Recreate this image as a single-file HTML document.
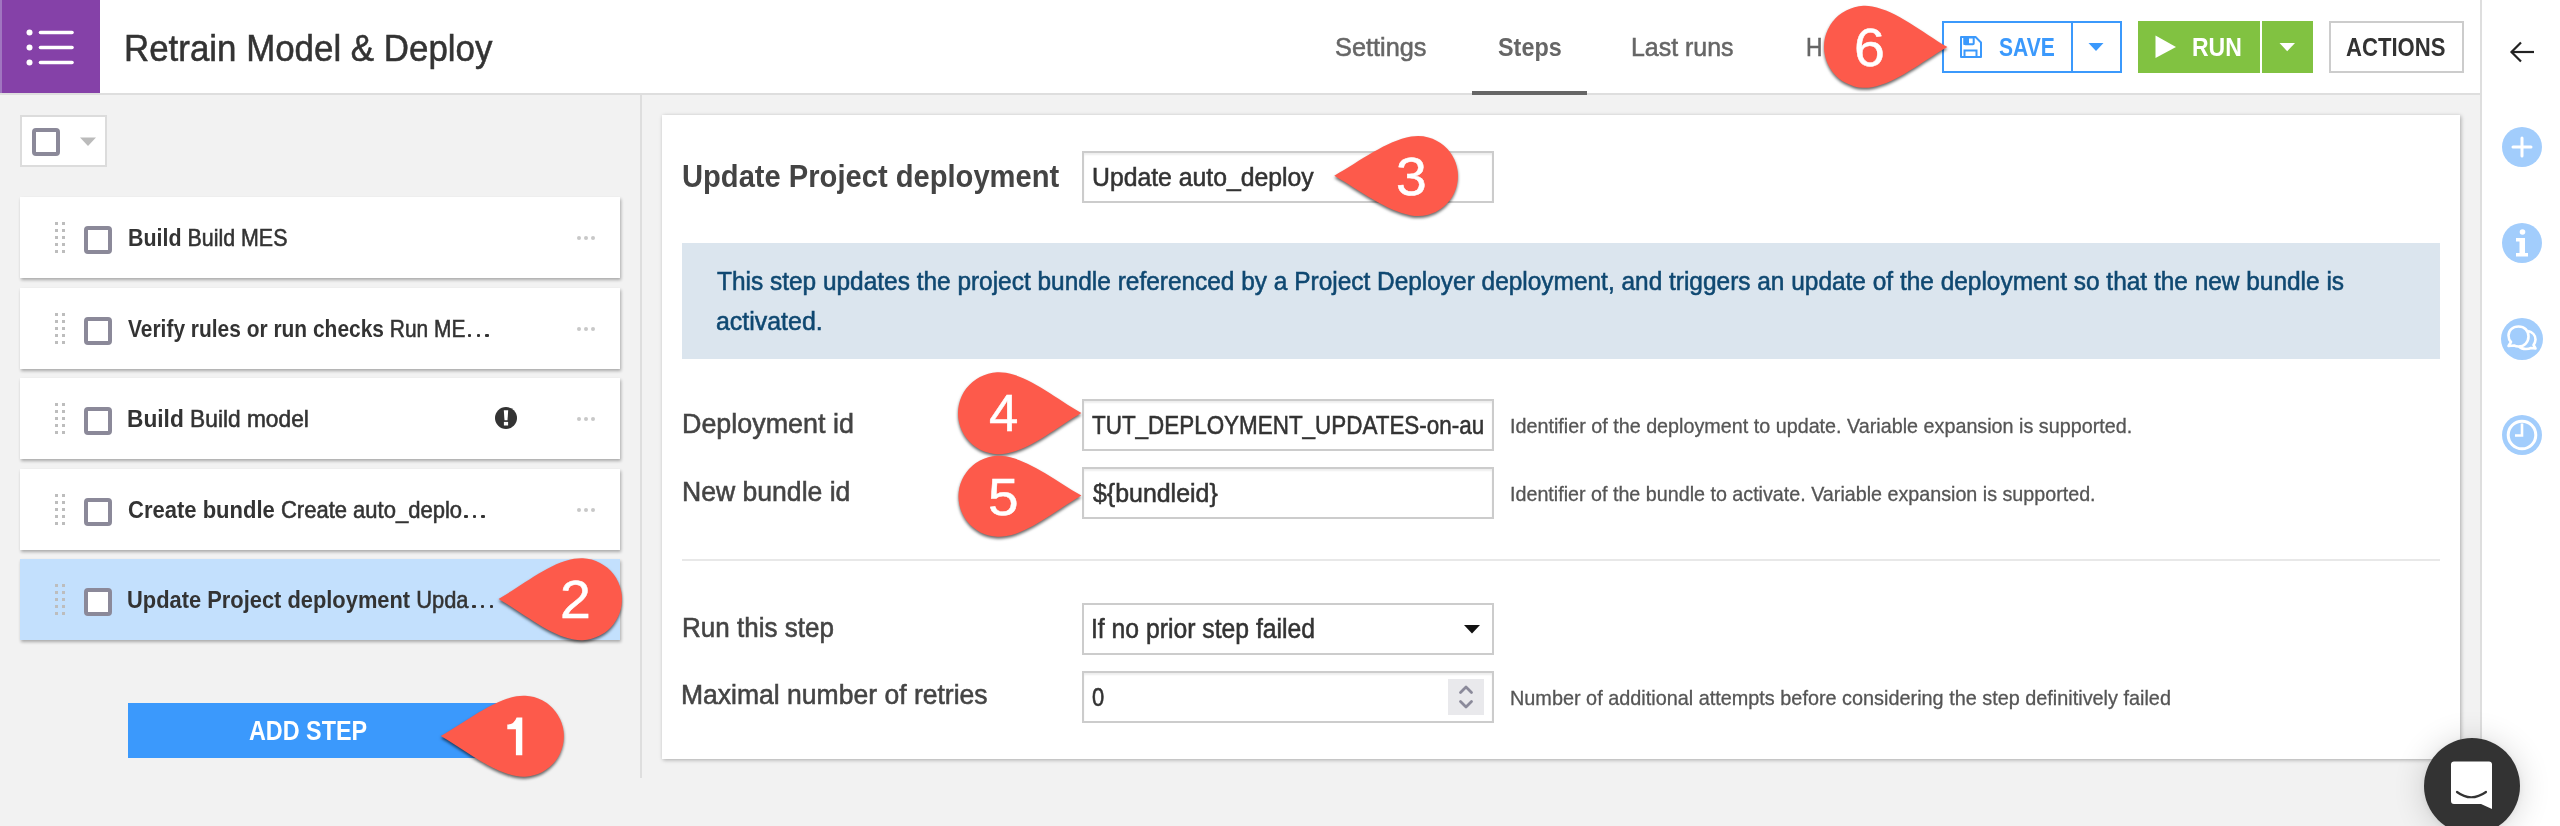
<!DOCTYPE html>
<html><head><meta charset="utf-8"><title>Retrain Model &amp; Deploy</title>
<style>
*{box-sizing:border-box}
html,body{margin:0;padding:0}
body{width:2560px;height:826px;overflow:hidden;position:relative;background:#f2f2f2;font-family:"Liberation Sans",sans-serif}
.t{position:absolute;white-space:nowrap;line-height:1;transform-origin:0 0;font-family:"Liberation Sans",sans-serif}
.t{-webkit-text-stroke:0.55px currentColor}
.t b,.t.tb{font-weight:bold;-webkit-text-stroke:0}
.t.ns{-webkit-text-stroke:0.5px currentColor}
.t.hs{-webkit-text-stroke:0.3px currentColor}
.abs{position:absolute}
#header{position:absolute;left:0;top:0;width:2480px;height:95px;background:#fff;border-bottom:2px solid #dedede}
#logo{position:absolute;left:0;top:0;width:100px;height:93px;background:#8541a8;border-left:2px solid #a076c0}
#tabline{position:absolute;left:1472px;top:91px;width:115px;height:4px;background:#666}
#savebtn{position:absolute;left:1942px;top:21px;width:180px;height:52px;border:2px solid #3b99fc;background:#fff}
#savediv{position:absolute;left:2071px;top:21px;width:2px;height:52px;background:#3b99fc}
#runbtn{position:absolute;left:2138px;top:21px;width:122px;height:52px;background:#81c241}
#runcaret{position:absolute;left:2262px;top:21px;width:51px;height:52px;background:#81c241}
#actbtn{position:absolute;left:2329px;top:21px;width:135px;height:52px;border:2px solid #cccccc;background:#fff}
#sidebar{position:absolute;left:2480px;top:0;width:80px;height:826px;background:#fff;border-left:2px solid #dedede}
.sicon{position:absolute;left:2502px;width:40px;height:40px;border-radius:50%;background:#a2cdfc}
#vdiv{position:absolute;left:640px;top:95px;width:2px;height:683px;background:#dedede}
#selall{position:absolute;left:20px;top:115px;width:87px;height:52px;background:#fff;border:2px solid #dcdcdc}
.cb{position:absolute;width:28px;height:28px;border:4px solid #8b8999;border-radius:4px;background:#fff}
.card{position:absolute;left:20px;width:600px;height:81px;background:#fff;box-shadow:1px 2px 3px rgba(0,0,0,.3)}
.card.sel{background:#c3e0fd}
.dh{position:absolute;width:3px;height:3px;background:#bdbdbd}
.ed{position:absolute;width:3.4px;height:3.2px;border-radius:1px;background:#333}
.md{position:absolute;width:4px;height:4px;border-radius:50%;background:#c8c8c8}
#addstep{position:absolute;left:128px;top:703px;width:382px;height:55px;background:#3b99fc}
#main{position:absolute;left:662px;top:115px;width:1798px;height:644px;background:#fff;box-shadow:1px 1px 4px rgba(0,0,0,.3)}
.inp{position:absolute;left:1082px;width:412px;height:52px;background:#fff;border:2px solid #cccccc;box-shadow:inset 0 2px 2px rgba(0,0,0,.07)}
#info{position:absolute;left:682px;top:243px;width:1758px;height:116px;background:#dbe5ee}
#hr{position:absolute;left:682px;top:559px;width:1758px;height:2px;background:#e8e8e8}
#spin{position:absolute;left:1448px;top:679px;width:36px;height:36px;background:#e9e9ec}
#intercom{position:absolute;left:2424px;top:738px;width:96px;height:96px;border-radius:50%;background:#333;box-shadow:0 1px 6px rgba(0,0,0,.06),0 2px 32px rgba(0,0,0,.16)}
#markers{position:absolute;left:0;top:0;width:2560px;height:826px;filter:drop-shadow(0 2px 1.5px rgba(0,0,0,.6))}
</style></head><body>
<div id="header"></div>
<div id="logo"><svg class="abs" style="left:-2px;top:0" width="100" height="93" viewBox="0 0 100 93">
<circle cx="29.5" cy="32.5" r="3" fill="#fff"/><circle cx="29.5" cy="47.5" r="3" fill="#fff"/><circle cx="29.5" cy="62.5" r="3" fill="#fff"/>
<g stroke="#fff" stroke-width="3.6" stroke-linecap="round"><line x1="40.5" y1="32.5" x2="72" y2="32.5"/><line x1="40.5" y1="47.5" x2="72" y2="47.5"/><line x1="40.5" y1="62.5" x2="72" y2="62.5"/></g></svg></div>
<span class="t" style="left:124.2px;top:29.6px;font-size:37.10px;color:#333;transform:scaleX(0.9408)">Retrain Model &amp; Deploy</span>
<span class="t" style="left:1335.4px;top:34.0px;font-size:26.23px;color:#666;transform:scaleX(0.9652)">Settings</span><span class="t tb" style="left:1497.6px;top:34.0px;font-size:26.23px;color:#666;transform:scaleX(0.8919)">Steps</span><span class="t" style="left:1631.4px;top:34.0px;font-size:26.23px;color:#666;transform:scaleX(0.9502)">Last runs</span><span class="t" style="left:1805.7px;top:34.0px;font-size:26.23px;color:#666;transform:scaleX(0.8700)">H</span>
<div id="tabline"></div>
<div id="savebtn"></div><div id="savediv"></div>
<svg class="abs" style="left:1959px;top:35px" width="24" height="24" viewBox="0 0 24 24"><path d="M2,2 H16.5 L22,7.5 V22 H2 Z" fill="none" stroke="#3b99fc" stroke-width="2" stroke-linejoin="round"/><rect x="5.5" y="2.5" width="9.2" height="6.8" rx="0.8" fill="none" stroke="#3b99fc" stroke-width="2"/><rect x="4.5" y="2" width="5.5" height="8" fill="#3b99fc"/><rect x="5.5" y="15.5" width="12" height="6.5" fill="none" stroke="#3b99fc" stroke-width="2"/></svg>
<span class="t tb" style="left:1998.9px;top:35.1px;font-size:25.80px;color:#3b99fc;transform:scaleX(0.8163)">SAVE</span>
<svg class="abs" style="left:2088px;top:42px" width="16" height="10" viewBox="0 0 16 10"><path d="M0.5,1 H15.5 L8,9 Z" fill="#3b99fc"/></svg>
<div id="runbtn"></div><div id="runcaret"></div>
<svg class="abs" style="left:2155px;top:35px" width="22" height="24" viewBox="0 0 22 24"><path d="M0.5,0.5 L21,12 L0.5,23 Z" fill="#fff"/></svg>
<span class="t tb" style="left:2192.2px;top:35.1px;font-size:25.80px;color:#fff;transform:scaleX(0.8920)">RUN</span>
<svg class="abs" style="left:2279px;top:42px" width="17" height="10" viewBox="0 0 17 10"><path d="M0.5,1 H16 L8.2,9.2 Z" fill="#fff"/></svg>
<div id="actbtn"></div>
<span class="t tb" style="left:2346.4px;top:35.1px;font-size:25.80px;color:#333;transform:scaleX(0.8565)">ACTIONS</span>
<div id="sidebar"></div>
<svg class="abs" style="left:2508px;top:40px" width="28" height="24" viewBox="0 0 28 24"><g fill="none" stroke="#222" stroke-width="2.2"><path d="M26,12 H3.5"/><path d="M13,2.5 L3.5,12 L13,21.5"/></g></svg>
<div class="sicon" style="top:127px"><svg width="40" height="40" viewBox="0 0 40 40"><g stroke="#fff" stroke-width="3" stroke-linecap="round"><line x1="11" y1="20" x2="29" y2="20"/><line x1="20" y1="11" x2="20" y2="29"/></g></svg></div>
<div class="sicon" style="top:223px"><svg width="40" height="40" viewBox="0 0 40 40"><circle cx="20.5" cy="9" r="2.8" fill="#fff"/><path d="M14,15 H23 V30 H26 V33.5 H14 V30 H17.5 V18.5 H14 Z" fill="#fff"/></svg></div>
<div class="sicon" style="top:318px;width:42px;height:42px;left:2501px"><svg width="42" height="42" viewBox="0 0 42 42"><g fill="none" stroke="#fff" stroke-width="2.6" stroke-linejoin="round"><path d="M17.5,8.5 C11.5,8.5 7.5,12.5 7.5,17.5 C7.5,20.5 8.5,22.5 10,24 L7.5,28 L13,27.5 C14.5,28.2 16,28.5 17.5,28.5 C23.5,28.5 27.5,24 27.5,18.5 C27.5,12.5 23.5,8.5 17.5,8.5 Z"/><path d="M27,13 C31.5,14 34.5,17.5 34.5,21.5 C34.5,23.5 33.5,25.5 32.5,27 L34.5,30.5 L30,30 C28.5,30.8 26.5,31 25,31 C22,31 19.5,30 18,28.5"/></g></svg></div>
<div class="sicon" style="top:415px"><svg width="40" height="40" viewBox="0 0 40 40"><circle cx="20" cy="20" r="13.8" fill="none" stroke="#fff" stroke-width="3"/><path d="M20,8.5 V20.5 H13" fill="none" stroke="#fff" stroke-width="2.6"/></svg></div>
<div id="vdiv"></div>
<div id="selall"><div class="cb" style="left:10px;top:11px"></div><svg class="abs" style="left:57px;top:19px" width="18" height="11" viewBox="0 0 18 11"><path d="M1,1.5 H17 L9,10 Z" fill="#bbb"/></svg></div>
<div class="card" style="top:197px"><i class="dh" style="left:35px;top:25px"></i><i class="dh" style="left:35px;top:32px"></i><i class="dh" style="left:35px;top:39px"></i><i class="dh" style="left:35px;top:46px"></i><i class="dh" style="left:35px;top:53px"></i><i class="dh" style="left:42px;top:25px"></i><i class="dh" style="left:42px;top:32px"></i><i class="dh" style="left:42px;top:39px"></i><i class="dh" style="left:42px;top:46px"></i><i class="dh" style="left:42px;top:53px"></i><div class="cb" style="left:64px;top:29px"></div><i class="md" style="left:557px;top:39px"></i><i class="md" style="left:564px;top:39px"></i><i class="md" style="left:571px;top:39px"></i></div>
<div class="card" style="top:288px"><i class="dh" style="left:35px;top:25px"></i><i class="dh" style="left:35px;top:32px"></i><i class="dh" style="left:35px;top:39px"></i><i class="dh" style="left:35px;top:46px"></i><i class="dh" style="left:35px;top:53px"></i><i class="dh" style="left:42px;top:25px"></i><i class="dh" style="left:42px;top:32px"></i><i class="dh" style="left:42px;top:39px"></i><i class="dh" style="left:42px;top:46px"></i><i class="dh" style="left:42px;top:53px"></i><div class="cb" style="left:64px;top:29px"></div><i class="md" style="left:557px;top:39px"></i><i class="md" style="left:564px;top:39px"></i><i class="md" style="left:571px;top:39px"></i></div>
<div class="card" style="top:378px"><i class="dh" style="left:35px;top:25px"></i><i class="dh" style="left:35px;top:32px"></i><i class="dh" style="left:35px;top:39px"></i><i class="dh" style="left:35px;top:46px"></i><i class="dh" style="left:35px;top:53px"></i><i class="dh" style="left:42px;top:25px"></i><i class="dh" style="left:42px;top:32px"></i><i class="dh" style="left:42px;top:39px"></i><i class="dh" style="left:42px;top:46px"></i><i class="dh" style="left:42px;top:53px"></i><div class="cb" style="left:64px;top:29px"></div><i class="md" style="left:557px;top:39px"></i><i class="md" style="left:564px;top:39px"></i><i class="md" style="left:571px;top:39px"></i><svg class="abs" style="left:474px;top:28px" width="24" height="24" viewBox="0 0 24 24"><circle cx="12" cy="12" r="11" fill="#333"/><path d="M9.8,4.2 H14.2 L13.5,14.2 H10.5 Z" fill="#fff"/><rect x="9.9" y="15.9" width="4.2" height="3.6" fill="#fff"/></svg></div>
<div class="card" style="top:469px"><i class="dh" style="left:35px;top:25px"></i><i class="dh" style="left:35px;top:32px"></i><i class="dh" style="left:35px;top:39px"></i><i class="dh" style="left:35px;top:46px"></i><i class="dh" style="left:35px;top:53px"></i><i class="dh" style="left:42px;top:25px"></i><i class="dh" style="left:42px;top:32px"></i><i class="dh" style="left:42px;top:39px"></i><i class="dh" style="left:42px;top:46px"></i><i class="dh" style="left:42px;top:53px"></i><div class="cb" style="left:64px;top:29px"></div><i class="md" style="left:557px;top:39px"></i><i class="md" style="left:564px;top:39px"></i><i class="md" style="left:571px;top:39px"></i></div>
<div class="card sel" style="top:559px"><i class="dh" style="left:35px;top:25px"></i><i class="dh" style="left:35px;top:32px"></i><i class="dh" style="left:35px;top:39px"></i><i class="dh" style="left:35px;top:46px"></i><i class="dh" style="left:35px;top:53px"></i><i class="dh" style="left:42px;top:25px"></i><i class="dh" style="left:42px;top:32px"></i><i class="dh" style="left:42px;top:39px"></i><i class="dh" style="left:42px;top:46px"></i><i class="dh" style="left:42px;top:53px"></i><div class="cb" style="left:64px;top:29px"></div></div>
<span class="t" style="left:127.5px;top:227.4px;font-size:23.19px;color:#333;transform:scaleX(0.9234)"><b>Build</b> Build MES</span><span class="t" style="left:127.6px;top:318.4px;font-size:23.19px;color:#333;transform:scaleX(0.9027)"><b>Verify rules or run checks</b> Run ME</span><span class="t" style="left:127.0px;top:408.4px;font-size:23.19px;color:#333;transform:scaleX(0.9798)"><b>Build</b> Build model</span><span class="t" style="left:127.7px;top:498.9px;font-size:23.19px;color:#333;transform:scaleX(0.9494)"><b>Create bundle</b> Create auto_deplo</span><span class="t" style="left:127.1px;top:589.4px;font-size:23.19px;color:#333;transform:scaleX(0.9431)"><b>Update Project deployment</b> Upda</span>
<i class="ed" style="left:468px;top:334px"></i><i class="ed" style="left:476.7px;top:334px"></i><i class="ed" style="left:485.4px;top:334px"></i><i class="ed" style="left:464.2px;top:515px"></i><i class="ed" style="left:472.9px;top:515px"></i><i class="ed" style="left:481.3px;top:515px"></i><i class="ed" style="left:472.4px;top:604.9px"></i><i class="ed" style="left:481.1px;top:604.9px"></i><i class="ed" style="left:489.8px;top:604.9px"></i>
<div id="addstep"></div>
<span class="t tb" style="left:248.6px;top:718.3px;font-size:26.81px;color:#fff;transform:scaleX(0.8718)">ADD STEP</span>
<div id="main"></div>
<span class="t tb" style="left:682.4px;top:161.2px;font-size:31.59px;color:#444;transform:scaleX(0.9227)">Update Project deployment</span>
<div class="inp" style="top:151px"></div>
<span class="t" style="left:1092.0px;top:164.6px;font-size:25.36px;color:#333;transform:scaleX(0.9767)">Update auto_deploy</span>
<div id="info"></div>
<span class="t" style="left:716.6px;top:268.9px;font-size:24.93px;color:#0f4871;transform:scaleX(0.9803)">This step updates the project bundle referenced by a Project Deployer deployment, and triggers an update of the deployment so that the new bundle is</span><span class="t" style="left:716.2px;top:308.9px;font-size:24.93px;color:#0f4871;transform:scaleX(1.0003)">activated.</span>
<span class="t" style="left:681.7px;top:410.0px;font-size:27.25px;color:#444;transform:scaleX(0.9865)">Deployment id</span><span class="t" style="left:681.7px;top:477.9px;font-size:27.25px;color:#444;transform:scaleX(0.9751)">New bundle id</span>
<div class="inp" style="top:399px"></div>
<div class="inp" style="top:467px"></div>
<span class="t" style="left:1092.3px;top:412.3px;font-size:26.09px;color:#333;transform:scaleX(0.8600)">TUT_DEPLOYMENT_UPDATES-on-au</span><span class="t" style="left:1092.7px;top:479.8px;font-size:26.09px;color:#333;transform:scaleX(0.9554)">${bundleid}</span>
<span class="t hs" style="left:1510.0px;top:415.8px;font-size:20.29px;color:#555;transform:scaleX(0.9738)">Identifier of the deployment to update. Variable expansion is supported.</span><span class="t hs" style="left:1510.0px;top:483.7px;font-size:20.29px;color:#555;transform:scaleX(0.9714)">Identifier of the bundle to activate. Variable expansion is supported.</span>
<div id="hr"></div>
<span class="t" style="left:681.5px;top:615.2px;font-size:26.96px;color:#444;transform:scaleX(0.9654)">Run this step</span><span class="t" style="left:681.4px;top:682.2px;font-size:26.96px;color:#444;transform:scaleX(0.9840)">Maximal number of retries</span>
<div class="inp" style="top:603px;box-shadow:none"></div>
<span class="t" style="left:1091.1px;top:616.3px;font-size:26.81px;color:#333;transform:scaleX(0.9226)">If no prior step failed</span>
<svg class="abs" style="left:1463px;top:624px" width="18" height="10" viewBox="0 0 18 10"><path d="M1,1 H17 L9,9.5 Z" fill="#111"/></svg>
<div class="inp" style="top:671px"></div>
<div id="spin"></div>
<svg class="abs" style="left:1456px;top:683px" width="20" height="28" viewBox="0 0 20 28"><g fill="none" stroke="#8b8a9a" stroke-width="2.8" stroke-linecap="round" stroke-linejoin="round"><path d="M4.5,9.5 L10,4 L15.5,9.5"/><path d="M4.5,18.5 L10,24 L15.5,18.5"/></g></svg>
<span class="t" style="left:1092.3px;top:685.3px;font-size:24.93px;color:#333;transform:scaleX(0.8800)">0</span>
<span class="t hs" style="left:1509.9px;top:687.8px;font-size:20.29px;color:#555;transform:scaleX(0.9787)">Number of additional attempts before considering the step definitively failed</span>
<div id="intercom"><svg class="abs" style="left:26px;top:22px" width="44" height="50" viewBox="0 0 44 50"><path d="M4,1.5 H39 Q42,1.5 42,4.5 V49 L31,44 H4 Q1,44 1,41 V4.5 Q1,1.5 4,1.5 Z" fill="#fff"/><path d="M7,32 Q21,42.5 36,32" fill="none" stroke="#333" stroke-width="2.2" stroke-linecap="round"/></svg></div>
<svg id="markers" width="2560" height="826" viewBox="0 0 2560 826"><g fill="#fd5a4b"><path d="M440.80,735.90 C466.84,720.99 491.88,700.54 516.51,696.29 A40.5,40.5 0 1 1 516.22,776.06 C491.62,771.63 466.73,750.99 440.80,735.90Z"/><path d="M498.50,599.00 C524.52,584.06 549.35,563.09 573.98,558.81 A41,41 0 1 1 573.78,639.56 C549.17,635.16 524.44,614.06 498.50,599.00Z"/><path d="M1334.30,175.80 C1360.32,160.86 1386.52,140.87 1411.15,136.59 A40,40 0 1 1 1410.96,215.38 C1386.35,210.98 1360.24,190.86 1334.30,175.80Z"/><path d="M1081.40,412.90 C1055.47,427.99 1030.87,449.12 1006.27,453.55 A41,41 0 1 1 1005.97,372.80 C1030.61,377.05 1055.36,397.99 1081.40,412.90Z"/><path d="M1081.40,495.60 C1055.55,510.82 1030.95,531.57 1006.37,536.12 A40.5,40.5 0 1 1 1005.69,456.36 C1030.35,460.49 1055.29,480.82 1081.40,495.60Z"/><path d="M1947.40,47.00 C1921.38,61.94 1896.65,82.91 1872.02,87.19 A41,41 0 1 1 1872.22,6.44 C1896.83,10.84 1921.46,31.94 1947.40,47.00Z"/></g></svg>
<svg class="abs" style="left:0;top:0" width="2560" height="826"><path d="M522.3,717.6 V755.2 H515.9 V729.3 H507.3 V724.6 Q514.2,724.6 516.6,717.6 Z" fill="#fff"/></svg>
<span class="t ns" style="left:559.7px;top:573.2px;font-size:53.33px;color:#fff;transform:scaleX(1.0400)">2</span><span class="t ns" style="left:1395.8px;top:151.2px;font-size:52.87px;color:#fff;transform:scaleX(1.0465)">3</span><span class="t ns" style="left:988.6px;top:388.2px;font-size:51.34px;color:#fff;transform:scaleX(1.0274)">4</span><span class="t ns" style="left:988.3px;top:471.5px;font-size:51.90px;color:#fff;transform:scaleX(1.0582)">5</span><span class="t ns" style="left:1854.0px;top:21.4px;font-size:53.15px;color:#fff;transform:scaleX(1.0436)">6</span>
</body></html>
